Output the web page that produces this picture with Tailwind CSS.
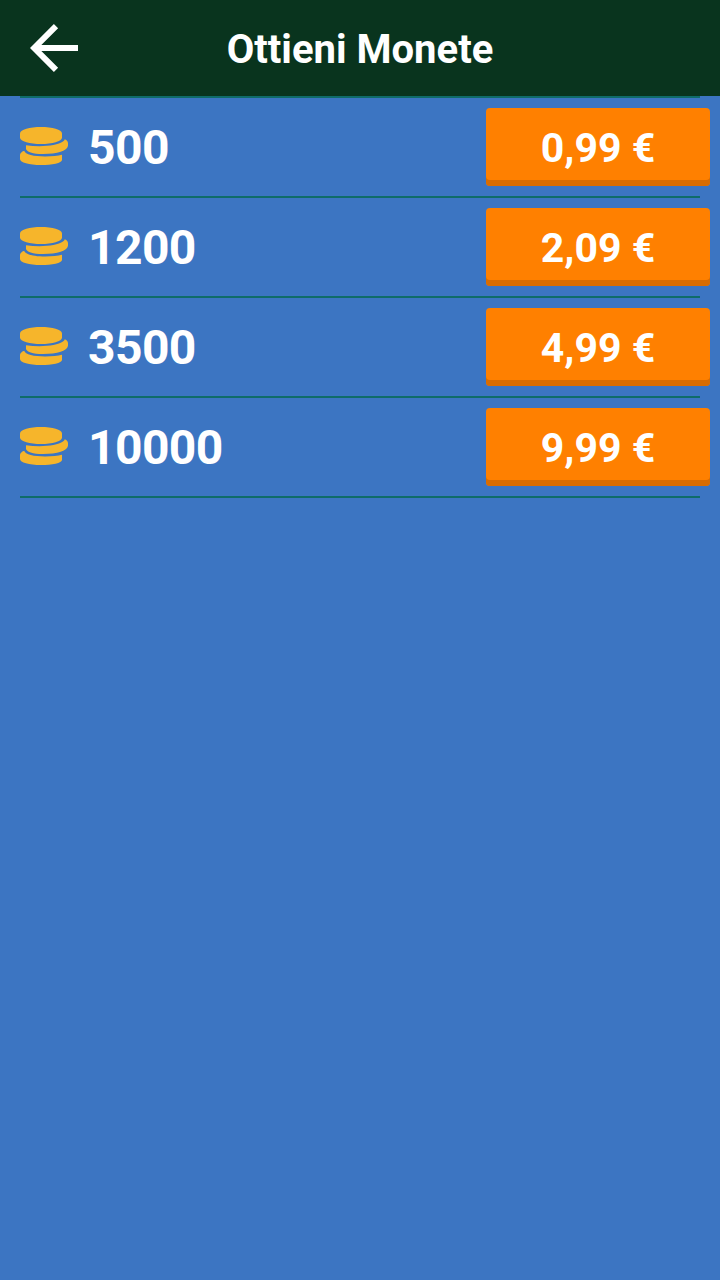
<!DOCTYPE html>
<html lang="it">
<head>
    <meta charset="UTF-8">
    <meta name="viewport" content="width=device-width, initial-scale=1.0">
    <title>Ottieni Monete</title>
    <script src="https://cdn.jsdelivr.net/npm/@tailwindcss/browser@4"></script>
</head>
<body class="min-h-screen bg-[#3c75c2] font-['Roboto',sans-serif] font-bold text-white">

    <!-- Icona delle monete, riutilizzata in ogni riga -->
    <svg class="hidden">
        <symbol id="monete" viewBox="0 0 48 38">
            <path d="M21 0C32 0 42 2.500 42 6.500V10.500C42 14.500 32 17 21 17S0 14.500 0 10.500V6.500C0 2.500 10 0 21 0Z"/>
            <path d="M6 18.200C20 20.200 37 19 43 14.500Q44.500 13.500 44.800 12.300C47 13.300 48 14.800 48 16.200V18.500C48 23.500 37 27 23 27C13 27 6 25 6 21.500Z"/>
            <path d="M4.200 23.800C5 27.500 14 29.500 25 29.500C32 29.500 38 28.900 42 27.800V33C42 36 32 38 21 38C9 38 0 35.500 0 32V28C0 26.500 1.500 24.800 4.200 23.800Z"/>
        </symbol>
    </svg>

    <header class="grid h-24 grid-cols-[1fr_auto_1fr] items-center bg-[#09341e] px-[30px]">
        <svg class="h-12 w-12" viewBox="0 0 48 48" fill="none" stroke="#fff" stroke-width="6">
            <path d="M26 2.200L4.200 24L26 45.800M4 24H48"/>
        </svg>
        <h1 class="pt-1 text-[40px] leading-12">Ottieni Monete</h1>
    </header>

    <main>
        <ul id="lista">
            <li class="mx-5 h-0.5 bg-[#0f6c69]"></li>
        </ul>
    </main>

    <script>
        const pacchetti = [
            { monete: '500', prezzo: '0,99 €' },
            { monete: '1200', prezzo: '2,09 €' },
            { monete: '3500', prezzo: '4,99 €' },
            { monete: '10000', prezzo: '9,99 €' }
        ];

        const lista = document.getElementById('lista');

        pacchetti.forEach(pacchetto => {
            lista.insertAdjacentHTML('beforeend', `
                <li>
                    <div class="flex h-[98px] items-center pr-2.5 pl-5">
                        <svg class="mb-0.5 h-[38px] w-12 fill-[#f6b52b]"><use href="#monete"/></svg>
                        <span class="ml-5 pt-0.5 text-[48px] leading-none tracking-[-0.6px]">${pacchetto.monete}</span>
                        <button class="ml-auto h-[78px] w-56 rounded-[4px] bg-[#ff8000] pt-[3px] text-[41px] leading-none shadow-[inset_0_-6px_0_#d96c00]">${pacchetto.prezzo}</button>
                    </div>
                    <div class="mx-5 h-0.5 bg-[#0f6c69]"></div>
                </li>
            `);
        });
    </script>

</body>
</html>
